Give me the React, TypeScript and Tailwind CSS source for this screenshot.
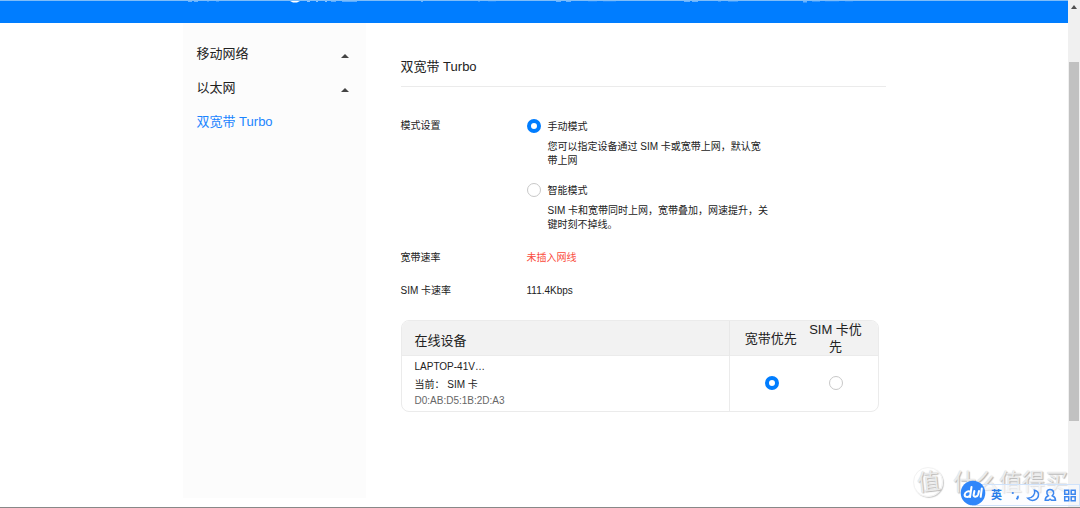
import React, { useState } from "react";

const radioClass =
  "m-0 size-[14px] shrink-0 cursor-pointer appearance-none rounded-full border border-[#c8c8c8] bg-white checked:border-4 checked:border-[#007dff]";

function TopBar() {
  return (
    <header className="h-[23px] overflow-hidden border-t border-[#7fbdf8] bg-[#007dff]">
      <svg
        className="mx-auto block h-[2px] w-[702px]"
        viewBox="183 0 702 2"
        preserveAspectRatio="none"
        fill="#ffffff"
        aria-hidden="true"
      >
        <path
          opacity="0.4"
          d="M188 0h4v1h-4zM194 0h4v1h-4zM207 0h2v.5h-2zM216 0h3v.5h-3zM421 0h2v1h-2zM478 0h2v.5h-2zM488 0h8v.3h-8zM556 0h5v1h-5zM566 0h5v1h-5zM588 0h9v.3h-9zM603 0h13v.3h-13zM684 0h6v1h-6zM692 0h6v1h-6zM718 0h3v.4h-3zM728 0h10v.4h-10zM803 0h4v1.500h-4zM812 0h8v.4h-8zM825 0h14v.3h-14zM845 0h8v.3h-8z"
        />
        <path d="M290 0h10l-3 1.6h-4z" />
        <path
          opacity="0.7"
          d="M307 0h3v.8h-3zM316 0h2v.8h-2zM325 0h2v.8h-2zM331 0h5v.6h-5zM342 0h15v.5h-15z"
        />
      </svg>
    </header>
  );
}

function Sidebar() {
  const groups = ["移动网络", "以太网"];
  return (
    <nav className="w-[183px] shrink-0 bg-[#fcfcfc] px-[14px] pt-[14px] text-[13px]">
      {groups.map((name) => (
        <button
          key={name}
          type="button"
          className="flex h-[34px] w-full cursor-pointer items-center justify-between pr-[3px] text-left"
        >
          {name}
          <svg className="mt-[3px] h-1 w-2" viewBox="0 0 8 4" fill="#444" aria-hidden="true">
            <path d="M0 4L4 0l4 4z" />
          </svg>
        </button>
      ))}
      <a href="#turbo" className="flex h-[34px] items-center text-[#1b85ff]">
        双宽带 Turbo
      </a>
    </nav>
  );
}

type ModeProps = {
  id: string;
  title: string;
  text: string;
  checked: boolean;
  onSelect: () => void;
};

function Mode({ id, title, text, checked, onSelect }: ModeProps) {
  return (
    <div className="w-[242px]">
      <label htmlFor={id} className="flex h-4 cursor-pointer items-center gap-[7px]">
        <input
          id={id}
          type="radio"
          name="mode"
          checked={checked}
          onChange={onSelect}
          className={radioClass}
        />
        {title}
      </label>
      <p className="mt-[6px] pl-[21px] leading-[14px]">{text}</p>
    </div>
  );
}

function Devices() {
  const [priority, setPriority] = useState("broadband");
  return (
    <div className="mr-[7px] overflow-hidden rounded-lg border border-[#ebebeb]">
      <table className="w-full table-fixed border-collapse">
        <colgroup>
          <col />
          <col className="w-[74px]" />
          <col className="w-[74px]" />
        </colgroup>
        <thead className="bg-[#f2f2f2] text-[13px] leading-[17px]">
          <tr className="h-[34px] border-b border-[#ebebeb]">
            <th className="pt-1 pl-[13px] text-left font-normal">在线设备</th>
            <th className="border-l border-[#e8e8e8] pl-[8px] font-normal">宽带优先</th>
            <th className="pr-[10px] font-normal">SIM 卡优先</th>
          </tr>
        </thead>
        <tbody>
          <tr className="h-[55px]">
            <td className="pt-[2px] pl-[13px] leading-4">
              <div>LAPTOP-41V…</div>
              <div className="mt-[2px]">当前： SIM 卡</div>
              <div className="text-[#666]">D0:AB:D5:1B:2D:A3</div>
            </td>
            <td className="border-l border-[#ebebeb] pl-[10px]">
              <input
                type="radio"
                name="priority"
                aria-label="宽带优先"
                checked={priority === "broadband"}
                onChange={() => setPriority("broadband")}
                className={radioClass + " mx-auto block"}
              />
            </td>
            <td className="pr-[10px]">
              <input
                type="radio"
                name="priority"
                aria-label="SIM 卡优先"
                checked={priority === "sim"}
                onChange={() => setPriority("sim")}
                className={radioClass + " mx-auto block"}
              />
            </td>
          </tr>
        </tbody>
      </table>
    </div>
  );
}

function Settings() {
  const [mode, setMode] = useState("manual");
  return (
    <main className="min-w-0 flex-1 pt-[23px] pl-[35px]">
      <h1 className="h-[41px] border-b border-[#ebebeb] text-[13px] leading-[42px]">双宽带 Turbo</h1>
      <div className="mt-[31px] flex">
        <h2 className="w-[126px] shrink-0 leading-4">模式设置</h2>
        <div className="flex flex-col gap-[14px]">
          <Mode
            id="manual"
            title="手动模式"
            text="您可以指定设备通过 SIM 卡或宽带上网，默认宽带上网"
            checked={mode === "manual"}
            onSelect={() => setMode("manual")}
          />
          <Mode
            id="smart"
            title="智能模式"
            text="SIM 卡和宽带同时上网，宽带叠加，网速提升，关键时刻不掉线。"
            checked={mode === "smart"}
            onSelect={() => setMode("smart")}
          />
        </div>
      </div>
      <dl className="mt-[9px]">
        <div className="flex h-[33px] items-center">
          <dt className="w-[126px]">宽带速率</dt>
          <dd className="text-[#fa4b3c]">未插入网线</dd>
        </div>
        <div className="flex h-[33px] items-center">
          <dt className="w-[126px]">SIM 卡速率</dt>
          <dd>111.4Kbps</dd>
        </div>
      </dl>
      <div className="mt-[13px]">
        <Devices />
      </div>
    </main>
  );
}

function ScrollTrack() {
  return (
    <div className="flex w-3 shrink-0 flex-col bg-[#f0f0f0] px-px" aria-hidden="true">
      <svg className="mt-[5px] ml-[2px] h-1 w-[6px]" viewBox="0 0 6 4" fill="#505050">
        <path d="M0 4L3 0l3 4z" />
      </svg>
      <div className="mt-[53px] h-[359px] bg-[#c1c1c1]" />
    </div>
  );
}

function InputBar() {
  return (
    <div className="absolute right-0 bottom-px flex h-[22px] w-[108px] items-center border border-[#cfe2fb] bg-[#fafcff]/60 text-[#2b7de9]">
      <svg className="absolute -bottom-px -left-[13px] size-[26px]" viewBox="0 0 26 26" aria-hidden="true">
        <circle cx="13" cy="13" r="12.3" fill="#2f86fa" />
        <g fill="none" stroke="#fff" strokeWidth="2" strokeLinecap="round" strokeLinejoin="round">
          <path d="M11.5 7L10 17M10.7 12.2c-2-1.9-5.5-.5-6 2.2-.4 2.7 3.5 3.6 5.4.8" />
          <path d="M14.4 11l-.8 4c-.4 2.4 3.7 2.2 4.6-.5l.8-3.5M21.8 8.5l-1.1 8.3" />
        </g>
      </svg>
      <span className="ml-[18px] text-[11px] leading-5 font-bold">英</span>
      <svg
        className="ml-[9px] h-4 w-[66px] shrink-0"
        viewBox="0 0 66 16"
        fill="none"
        stroke="#3b86ef"
        strokeWidth="1.5"
        aria-hidden="true"
      >
        <circle cx="1.8" cy="6" r="1.100" fill="#3b86ef" stroke="none" />
        <path d="M6.400 9c.9 1 .4 2.200-.9 3.300" strokeWidth="2" />
        <path d="M23.500 3.300c1.200 4-2 7.700-6.700 7.900 4 4.200 10.700 1.800 10.700-3.600 0-2-1.500-3.700-4-4.300z" />
        <path d="M39 2.500c-3.300 0-4.300 3.700-1.700 6.200-2 .7-3.100 2-3.100 4.600h3.200l1.600-1.200 1.600 1.200h3.900c0-2.600-1.300-3.900-3.200-4.600 2.600-2.500 1.400-6.200-2.300-6.200z" />
        <path d="M53.700 3.200h4v4h-4zM60.200 3.200h4v4h-4zM53.700 9.700h4v4h-4zM60.200 9.700h4v4h-4z" />
      </svg>
    </div>
  );
}

function Watermark() {
  return (
    <div className="pointer-events-none absolute right-[12px] bottom-[9px] flex items-center gap-[10px] text-[23px] leading-8 text-white/70 [text-shadow:1px_1px_1px_#b4b4b4,0_0_1px_#c0c0c0]">
      <span className="flex size-[30px] items-center justify-center rounded-full border border-[#f2f2f2] shadow-[1px_1px_1px_#cccccc]">
        <span className="-rotate-6">值</span>
      </span>
      <span>什么值得买</span>
    </div>
  );
}

export default function App() {
  return (
    <div className="relative flex min-h-screen overflow-hidden border-b border-[#888] bg-white font-['Liberation_Sans','Noto_Sans_CJK_SC',sans-serif] text-[10px] text-[#222]">
      <div className="flex min-w-0 flex-1 flex-col">
        <TopBar />
        <div className="mx-auto mb-[9px] flex w-full max-w-[703px] flex-1">
          <Sidebar />
          <Settings />
        </div>
      </div>
      <ScrollTrack />
      <Watermark />
      <InputBar />
    </div>
  );
}
